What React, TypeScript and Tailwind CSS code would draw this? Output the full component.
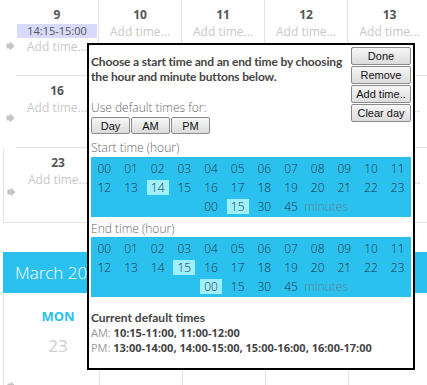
import React from "react";

const BLUE = "bg-[#2bc1ef]";

function Arrow() {
  return (
    <svg width="9" height="10" viewBox="0 0 9 10" className="text-[#c4c4c4]">
      <path d="M0.5 2.5 L4 2.5 L4 0.5 L8.5 5 L4 9.5 L4 7.5 L0.5 7.5 Z" fill="currentColor" />
    </svg>
  );
}

function DayCell({ day, slot, last }: { day: string; slot?: string; last?: boolean }) {
  return (
    <div className={`w-[83px] shrink-0 flex flex-col items-center pt-[7px] ${last ? "" : "border-r border-[#e3e3e3]"}`}>
      <div className="text-[12px] leading-[16px] font-bold text-[#555]">{day}</div>
      {slot && (
        <div className="w-[80px] h-[14px] mt-[1px] bg-[#d9d9fb] text-[11px] leading-[14px] text-[#555] text-center">{slot}</div>
      )}
      <div className="text-[12px] leading-[16px] text-[#c8c8c8] mt-[1px]">Add time...</div>
    </div>
  );
}

function WeekRow({ days, first, h, boxed }: { days: string[]; first?: boolean; h: string; boxed?: boolean }) {
  return (
    <div className={`flex ${h} ml-[3px] ${boxed ? "border-l border-b border-[#e3e3e3]" : ""}`}>
      <div className="w-[13px] shrink-0 flex flex-col justify-end pb-[25px] pl-[3px]">
        <Arrow />
      </div>
      <div className={`flex ${boxed ? "" : "border-b border-[#e3e3e3]"}`}>
        {days.map((d, i) => (
          <DayCell key={i} day={d} slot={first && i === 0 ? "14:15-15:00" : undefined} last={i === days.length - 1} />
        ))}
      </div>
    </div>
  );
}

function HourGrid({ hour, minute }: { hour: number; minute: string }) {
  const hours = Array.from({ length: 24 }, (_, i) => String(i).padStart(2, "0"));
  const mins = ["00", "15", "30", "45"];
  return (
    <div className={`${BLUE} w-[320px] h-[60px] pt-[2px] grid grid-cols-12 auto-rows-[19px] text-[12px] font-light text-[#1c3544]`}>
      {hours.map((h, i) => (
        <div key={h} className="flex items-center justify-center">
          <span className={`w-[22px] h-[15px] leading-[15px] text-center ${i === hour ? "bg-[#9ff0fd]" : ""}`}>{h}</span>
        </div>
      ))}
      <div className="col-span-4" />
      {mins.map((m) => (
        <div key={m} className="flex items-center justify-center">
          <span className={`w-[22px] h-[15px] leading-[15px] text-center ${m === minute ? "bg-[#9ff0fd]" : ""}`}>{m}</span>
        </div>
      ))}
      <div className="col-span-4 flex items-center text-[#5f8796]">minutes</div>
    </div>
  );
}

function GrayButton({ label, w, h = "h-[18px]" }: { label: string; w: string; h?: string }) {
  return (
    <button className={`${w} ${h} border border-[#8a8a8a] rounded-[2px] bg-gradient-to-b from-[#f6f6f6] to-[#dcdcdc] text-[11px] leading-[14px] text-[#111] text-center`} style={{ fontFamily: "'Liberation Sans', Arial, sans-serif" }}>
      {label}
    </button>
  );
}

export default function App() {
  return (
    <div className="relative w-[427px] h-[385px] overflow-hidden bg-white" style={{ fontFamily: "'Open Sans', 'Noto Sans', sans-serif" }}>
      {/* weeks */}
      <div className="flex flex-col">
        <WeekRow days={["9", "10", "11", "12", "13"]} first h="h-[76px]" />
        <WeekRow days={["16", "17", "18", "19", "20"]} h="h-[72px]" />
        <WeekRow days={["23", "24", "25", "26", "27"]} h="h-[75px]" boxed />
      </div>

      {/* month */}
      <div className="mt-[29px] ml-[3px] h-[41px] bg-[#2bc1ef] text-white text-[17px] font-light leading-[41px] pl-[12px]">March 2015</div>
      <div className="ml-[3px] flex border-l border-[#e3e3e3] h-[100px]">
        <div className="w-[13px] shrink-0 flex flex-col justify-end pl-[3px] pb-[2px]">
          <Arrow />
        </div>
        {["MON", "TUE", "WED", "THU", "FRI"].map((d, i) => (
          <div key={d} className="w-[83px] shrink-0 border-r border-[#e3e3e3] flex flex-col items-center pt-[14px]">
            <div className="text-[13px] font-bold text-[#2bc1ef] leading-[18px]">{d}</div>
            <div className="text-[17px] text-[#cfcfcf] leading-[24px] mt-[9px]">{23 + i}</div>
          </div>
        ))}
      </div>

      {/* popup */}
      <div className="absolute left-[87px] top-[43px] w-[328px] h-[327px] border-2 border-black bg-white px-[2px]">
        <div className="flex">
          <div className="flex-1 flex flex-col">
            <div className="pt-[9px] text-[12px] leading-[15px] font-bold text-[#444] whitespace-nowrap tracking-[-0.15px]" style={{ fontFamily: "Lato, 'Open Sans', sans-serif" }}>
              Choose a start time and an end time by choosing
              <br />
              the hour and minute buttons below.
            </div>
            <div className="mt-[16px] text-[12px] leading-[15px] text-[#666] font-light">Use default times for:</div>
            <div className="flex gap-[1px] mt-[2px]">
              <GrayButton label="Day" w="w-[39px]" h="h-[17px]" />
              <GrayButton label="AM" w="w-[39px]" h="h-[17px]" />
              <GrayButton label="PM" w="w-[39px]" h="h-[17px]" />
            </div>
          </div>
          <div className="w-[60px] flex flex-col gap-[1px] pt-[2px]">
            <GrayButton label="Done" w="w-[60px]" />
            <GrayButton label="Remove" w="w-[60px]" />
            <GrayButton label="Add time.." w="w-[60px]" />
            <GrayButton label="Clear day" w="w-[60px]" />
          </div>
        </div>
        <div className="mt-[6px] text-[12px] leading-[15px] text-[#666] font-light">Start time (hour)</div>
        <div className="mt-[2px]">
          <HourGrid hour={14} minute="15" />
        </div>
        <div className="mt-[4px] text-[12px] leading-[15px] text-[#666] font-light">End time (hour)</div>
        <div className="mt-[1px]">
          <HourGrid hour={15} minute="00" />
        </div>
        <div className="mt-[13px] text-[12px] leading-[15px] font-bold text-[#444]" style={{ fontFamily: "Lato, 'Open Sans', sans-serif" }}>Current default times</div>
        <div className="text-[11px] leading-[15px] text-[#999]">
          AM: <span className="font-bold text-[#444]">10:15-11:00, 11:00-12:00</span>
        </div>
        <div className="text-[11px] leading-[15px] text-[#999]">
          PM: <span className="font-bold text-[#444]">13:00-14:00, 14:00-15:00, 15:00-16:00, 16:00-17:00</span>
        </div>
      </div>
    </div>
  );
}
